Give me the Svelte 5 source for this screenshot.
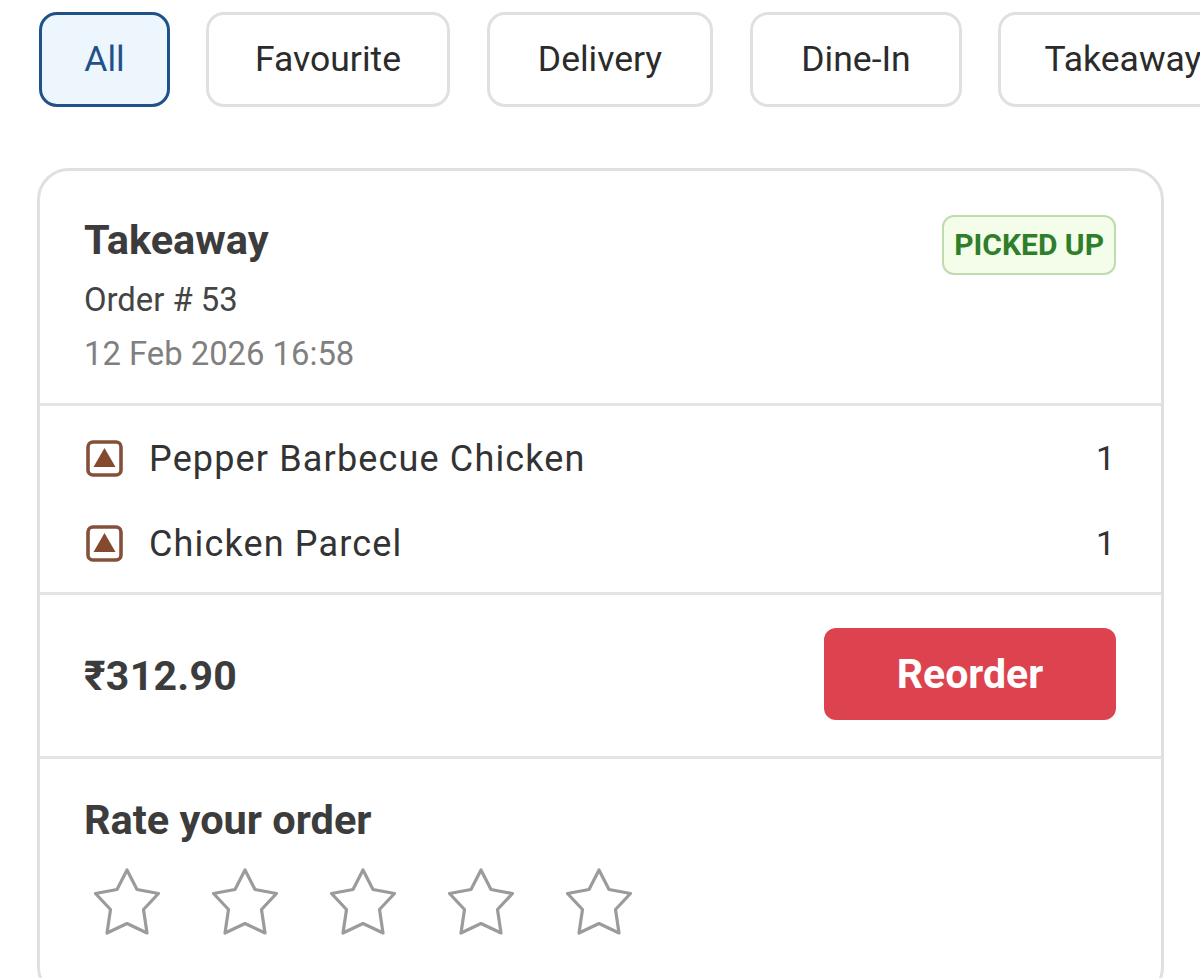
<script>
  // Order history: filter tabs above one order card.
  const tabs = ['All', 'Favourite', 'Delivery', 'Dine-In', 'Takeaway'];
  const items = [
    { name: 'Pepper Barbecue Chicken', qty: 1 },
    { name: 'Chicken Parcel', qty: 1 }
  ];
  let active = $state('All');
  let rating = $state(0);
</script>

<div class="page">
  <div class="tabs">
    {#each tabs as t (t)}
      <button type="button" class="tab" class:sel={active === t} onclick={() => (active = t)}>{t}</button>
    {/each}
  </div>

  <div class="card">
    <section class="head">
      <div>
        <h2>Takeaway</h2>
        <div class="num">Order # 53</div>
        <div class="date">12 Feb 2026 16:58</div>
      </div>
      <span class="status">PICKED UP</span>
    </section>

    <section class="items">
      {#each items as it (it.name)}
        <div class="item">
          <svg class="mark" viewBox="0 0 37 37" width="37" height="37">
            <rect x="2" y="2" width="33" height="33" rx="5" fill="#fff" stroke="#85503a" stroke-width="3.6" />
            <path d="M18.5 8 L29.5 27 H7.5 Z" fill="#85492d" />
          </svg>
          <span class="name">{it.name}</span>
          <span class="qty">{it.qty}</span>
        </div>
      {/each}
    </section>

    <section class="total">
      <span class="price">₹312.90</span>
      <button type="button" class="reorder">Reorder</button>
    </section>

    <section class="rate">
      <h3>Rate your order</h3>
      <div class="stars">
        {#each [1, 2, 3, 4, 5] as n}
          <button type="button" class="star" aria-label="Rate {n}" onclick={() => (rating = n)}>
            <svg viewBox="0 0 66 68" width="66" height="68">
              <path
                d="M33 2 L43 21.5 L64.5 25.5 L49.5 41.5 L53 65 L33 55.5 L13 65 L16.5 41.5 L1.5 25.5 L23 21.5 Z"
                fill={rating >= n ? '#f5b301' : 'none'}
                stroke="#9b9b9b"
                stroke-width="3.2"
                stroke-linejoin="round"
              />
            </svg>
          </button>
        {/each}
      </div>
    </section>
  </div>
</div>

<style>
  :global(body) {
    background: #fff;
    overflow: hidden;
  }
  .page {
    width: 1200px;
    height: 978px;
    overflow: hidden;
    box-sizing: border-box;
    padding: 12px 36px 0 37px;
    font-family: Roboto, "Liberation Sans", sans-serif;
    color: #3a3a3a;
  }
  .tabs {
    display: flex;
    gap: 36px;
    width: 1400px;
    padding-left: 2px;
  }
  .tab {
    height: 95px;
    padding: 0 0 2px;
    box-sizing: border-box;
    background: #fff;
    border: 3px solid #e0e0e0;
    border-radius: 18px;
    font: inherit;
    font-size: 35.5px;
    color: #2b2b2b;
    flex: none;
    cursor: pointer;
  }
  .tab:nth-child(1) {
    width: 131px;
  }
  .tab:nth-child(2) {
    width: 244px;
  }
  .tab:nth-child(3) {
    width: 226px;
    margin-left: 1px;
  }
  .tab:nth-child(4) {
    width: 212px;
    margin-left: 1px;
  }
  .tab:nth-child(5) {
    width: 250px;
  }
  .tab.sel {
    background: #eef6fd;
    border-color: #1f5288;
    color: #1f5288;
  }
  .card {
    margin-top: 61px;
    width: 1127px;
    box-sizing: border-box;
    border: 3px solid #e0e0e0;
    border-radius: 32px;
    background: #fff;
    padding-bottom: 60px;
  }
  section {
    padding: 0 45px 0 44px;
  }
  section + section {
    border-top: 3px solid #e4e4e4;
  }
  .head {
    height: 232px;
    box-sizing: border-box;
    display: flex;
    justify-content: space-between;
    align-items: flex-start;
    padding-top: 45px;
  }
  h2 {
    margin: 0;
    font-size: 41.5px;
    line-height: 48px;
    font-weight: 700;
    color: #3c3c3c;
  }
  .num {
    margin-top: 16px;
    font-size: 32.8px;
    line-height: 40px;
    color: #444;
  }
  .date {
    margin-top: 14px;
    font-size: 32.8px;
    line-height: 40px;
    color: #808080;
  }
  .status {
    margin-top: -1px;
    background: #f3fde9;
    border: 2px solid #bfdcae;
    border-radius: 12px;
    color: #2f7f2a;
    font-size: 30px;
    font-weight: 700;
    line-height: 56px;
    padding: 0 10px;
  }
  .items {
    height: 189px;
    box-sizing: border-box;
    padding-top: 10px;
  }
  .item {
    display: flex;
    align-items: center;
    height: 85px;
  }
  .mark {
    flex: none;
    margin-left: 2px;
    margin-right: 26px;
  }
  .name {
    flex: 1;
    font-size: 36px;
    letter-spacing: 1.15px;
    color: #333;
  }
  .qty {
    margin-right: 1px;
    padding-bottom: 2px;
    font-size: 34px;
    color: #333;
  }
  .total {
    height: 164px;
    box-sizing: border-box;
    display: flex;
    justify-content: space-between;
    align-items: center;
    padding-bottom: 4px;
  }
  .price {
    padding-top: 4px;
    font-size: 41px;
    font-weight: 700;
    letter-spacing: 0.3px;
    color: #3c3c3c;
  }
  .reorder {
    width: 292px;
    height: 92px;
    border: 0;
    border-radius: 12px;
    background: #dc434e;
    color: #fff;
    font: inherit;
    font-size: 41px;
    font-weight: 700;
    cursor: pointer;
  }
  .rate {
    padding-top: 37px;
  }
  h3 {
    margin: 0;
    font-size: 41.5px;
    line-height: 48px;
    font-weight: 700;
    color: #3c3c3c;
  }
  .stars {
    display: flex;
    gap: 52px;
    margin-top: 24px;
    padding-left: 10px;
  }
  .star {
    padding: 0;
    border: 0;
    background: none;
    width: 66px;
    height: 68px;
    cursor: pointer;
  }
</style>
